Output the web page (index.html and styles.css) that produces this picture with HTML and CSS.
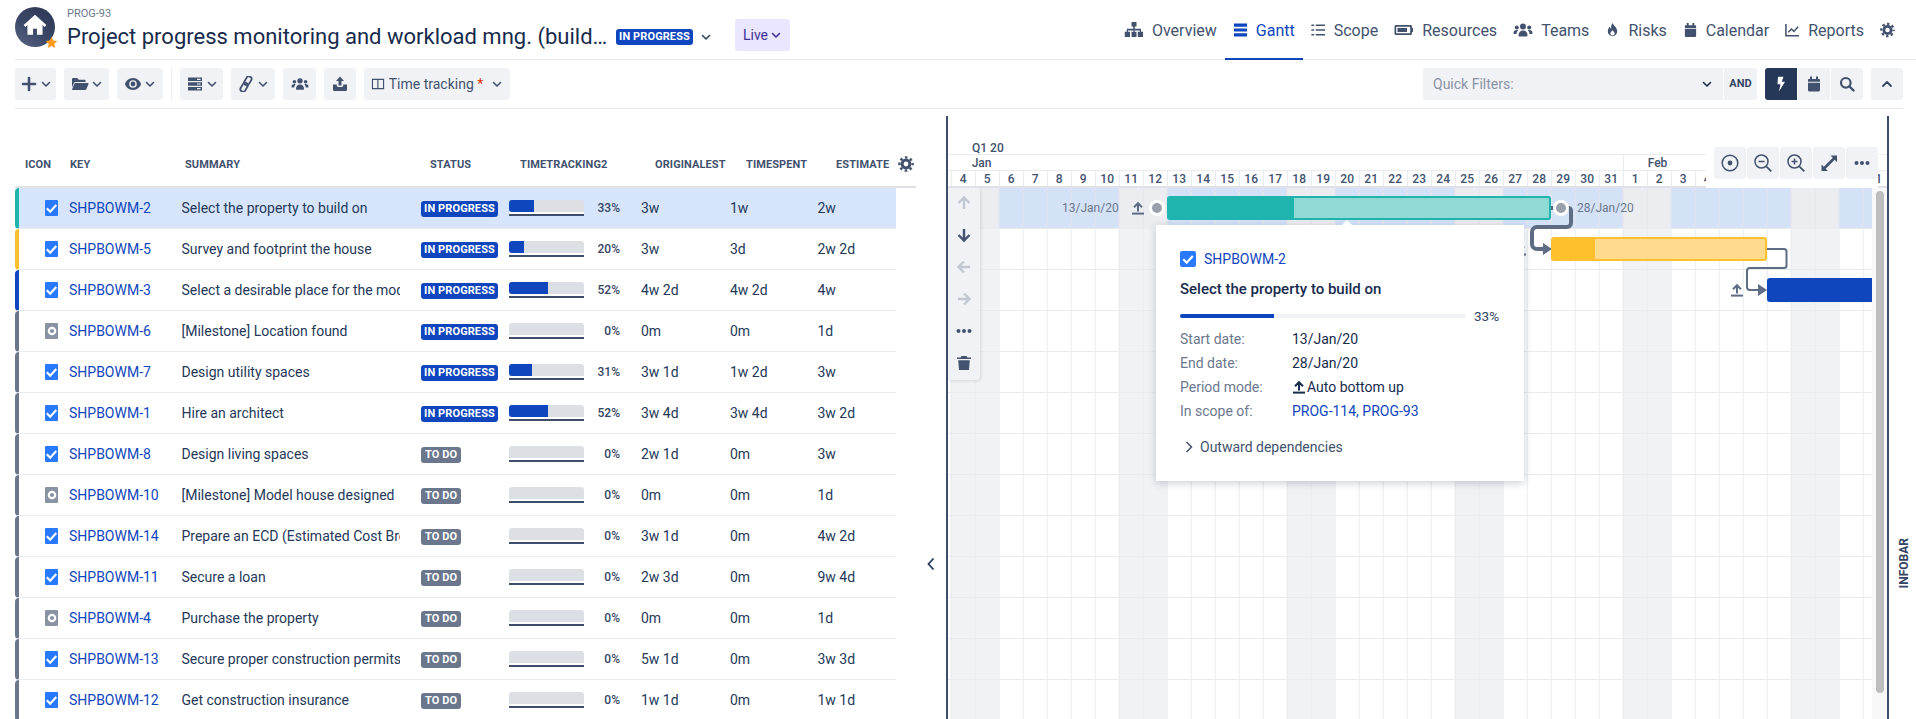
FILE: index.html
```html
<!DOCTYPE html>
<html lang="en">
<head>
<meta charset="utf-8">
<title>Project progress monitoring</title>
<link rel="stylesheet" href="styles.css">
</head>
<body>
<svg class="defs" width="0" height="0" aria-hidden="true">
  <symbol id="i-chev" viewBox="0 0 12 12"><path d="M2.5 4.5 6 8l3.500-3.500" fill="none" stroke="currentColor" stroke-width="1.600" stroke-linecap="round" stroke-linejoin="round"/></symbol>
  <symbol id="i-up" viewBox="0 0 12 12"><path d="M2 8l4-4 4 4" fill="none" stroke="currentColor" stroke-width="1.800" stroke-linecap="round" stroke-linejoin="round"/></symbol>
  <symbol id="i-plus" viewBox="0 0 16 16"><path d="M8 2v12M2 8h12" stroke="currentColor" stroke-width="2.600" stroke-linecap="round"/></symbol>
  <symbol id="i-folder" viewBox="0 0 18 16"><path d="M1 3.200C1 2.500 1.500 2 2.200 2h4l1.600 1.700h5.600c.7 0 1.200.5 1.200 1.200V6H4.600c-.8 0-1.400.4-1.700 1.100L1 11.500z" fill="currentColor"/><path d="M4.400 7h12.400c.5 0 .9.5.7 1l-2.200 5.300c-.2.4-.5.7-1 .7H1.800c-.5 0-.8-.5-.6-1L3.400 7.700c.2-.4.6-.7 1-.7z" fill="currentColor"/></symbol>
  <symbol id="i-eye" viewBox="0 0 18 16"><path fill-rule="evenodd" d="M9 2c4.300 0 7.500 3.500 8 6-.5 2.500-3.700 6-8 6s-7.500-3.500-8-6c.5-2.500 3.700-6 8-6zm0 2.200A3.800 3.800 0 1 0 9 11.800 3.800 3.800 0 0 0 9 4.200z" fill="currentColor"/><circle cx="9" cy="8" r="2.400" fill="currentColor"/></symbol>
  <symbol id="i-server" viewBox="0 0 16 16"><path fill-rule="evenodd" d="M1 1.500h14v3.600H1zM1 6.200h14v3.600H1zM1 10.900h14v3.600H1zM10 2.700v1.200h3.500V2.700zM10 7.400v1.200h3.500V7.400zM10 12.100v1.200h3.500v-1.200z" fill="currentColor"/></symbol>
  <symbol id="i-link" viewBox="0 0 16 16"><g fill="none" stroke="currentColor" stroke-width="1.800" transform="rotate(30 8 8)"><rect x="5.400" y="-.5" width="5.200" height="9.500" rx="2.600"/><rect x="5.400" y="7" width="5.200" height="9.500" rx="2.600"/></g></symbol>
  <symbol id="i-users" viewBox="0 0 20 16"><circle cx="10" cy="4.500" r="3" fill="currentColor"/><circle cx="3.800" cy="5.500" r="2" fill="currentColor"/><circle cx="16.200" cy="5.500" r="2" fill="currentColor"/><path d="M5.500 13.500c0-3 1.800-5 4.500-5s4.500 2 4.500 5c0 .5-.4 1-1 1h-7c-.6 0-1-.5-1-1zM.5 11c0-1.800 1.200-3 3.300-3 .5 0 1 .1 1.400.3-1 .9-1.500 2.100-1.700 3.700H1.500c-.6 0-1-.4-1-1zM19.500 11c0-1.800-1.200-3-3.300-3-.5 0-1 .1-1.400.3 1 .9 1.500 2.100 1.700 3.700h2c.6 0 1-.4 1-1z" fill="currentColor"/></symbol>
  <symbol id="i-export" viewBox="0 0 16 16"><path d="M8 .5 12 5H9.500v4.500h-3V5H4z" fill="currentColor"/><path d="M1 8.500h3.800v1c0 .8.600 1.400 1.400 1.400h3.600c.8 0 1.400-.6 1.400-1.400v-1H15v5.300c0 .7-.5 1.200-1.200 1.200H2.200c-.7 0-1.200-.5-1.200-1.200z" fill="currentColor"/></symbol>
  <symbol id="i-cols" viewBox="0 0 16 16"><path fill-rule="evenodd" d="M1 2h14v12H1zM2.300 3.300v9.400h4.900V3.300zm6.200 0v9.400h5.200V3.300z" fill="currentColor"/></symbol>
  <symbol id="i-tree" viewBox="0 0 20 16"><path d="M7.500 0h5v4.500h-1.700v2.300h6.200v3h2v5.200h-5.200V9.800h2V8.400h-5.200v1.400h1.900v5.200H7.500V9.800h1.900V8.400H4v1.400h2v5.200H.8V9.800h2v-3h6.400V4.500H7.500z" fill="currentColor"/></symbol>
  <symbol id="i-gantt" viewBox="0 0 16 16"><path d="M1 1h14v3.500H1zM1 6.300h14v3.400H1zM1 11.500h14V15H1z" fill="currentColor"/></symbol>
  <symbol id="i-list" viewBox="0 0 16 16"><path d="M5 3h10M5 8h10M5 13h10" stroke="currentColor" stroke-width="1.700"/><path d="M1 3h1.700M1 8h1.700M1 13h1.700" stroke="currentColor" stroke-width="1.700" stroke-linecap="round"/></symbol>
  <symbol id="i-battery" viewBox="0 0 20 16"><path fill-rule="evenodd" d="M2 3h14.500c.8 0 1.500.7 1.500 1.500V6h1v4h-1v1.500c0 .8-.7 1.500-1.500 1.500H2c-.8 0-1.500-.7-1.500-1.500v-7C.5 3.700 1.200 3 2 3zm.2 1.800v6.400h14V4.800z" fill="currentColor"/><path d="M3.500 6h9.500v4H3.500z" fill="currentColor"/></symbol>
  <symbol id="i-fire" viewBox="0 0 16 16"><path fill-rule="evenodd" d="M8.300.5c.4 2.700 4.700 4.400 4.700 9.100a5 5 0 0 1-10 0c0-2.300 1.100-3.900 2.300-5 .1 1.100.5 1.900 1.300 2.400C6.200 4.500 6.700 2.300 8.300.5zM8 8.200c-.8 1.200-2.300 1.900-2.300 3.500a2.300 2.300 0 0 0 4.600 0c0-1.500-1.500-2.300-2.300-3.500z" fill="currentColor"/></symbol>
  <symbol id="i-cal" viewBox="0 0 16 16"><path d="M4 .5h2V3h4V.5h2V3h1c.6 0 1 .5 1 1v1.800H2V4c0-.5.4-1 1-1h1zM2 6.700h12V14c0 .8-.6 1.500-1.400 1.500H3.400C2.600 15.500 2 14.800 2 14z" fill="currentColor"/></symbol>
  <symbol id="i-chart" viewBox="0 0 16 16"><path d="M1 1.500V14h14" fill="none" stroke="currentColor" stroke-width="1.600"/><path d="M3.500 10.500 7 7l2.500 2.500L14 4.500" fill="none" stroke="currentColor" stroke-width="1.600"/></symbol>
  <symbol id="i-gear" viewBox="0 0 16 16"><circle cx="8" cy="8" r="3.900" fill="none" stroke="currentColor" stroke-width="3"/><circle cx="8" cy="8" r="6.600" fill="none" stroke="currentColor" stroke-width="2.400" stroke-dasharray="2.590 2.590" stroke-dashoffset="1.295"/></symbol>
  <symbol id="i-bolt" viewBox="0 0 16 16"><path d="M5 .8h5.500L8.800 5.800H12L6 15.500l1.500-7.300H4.500z" fill="currentColor"/></symbol>
  <symbol id="i-search" viewBox="0 0 16 16"><circle cx="6.800" cy="6.800" r="4.800" fill="none" stroke="currentColor" stroke-width="2.200"/><path d="m10.500 10.500 4 4" stroke="currentColor" stroke-width="2.400" stroke-linecap="round"/></symbol>
  <symbol id="i-target" viewBox="0 0 20 20"><circle cx="10" cy="10" r="7.800" fill="none" stroke="currentColor" stroke-width="1.500"/><circle cx="10" cy="10" r="2.400" fill="currentColor"/></symbol>
  <symbol id="i-zoomout" viewBox="0 0 20 20"><circle cx="8.500" cy="8.500" r="6.500" fill="none" stroke="currentColor" stroke-width="1.500"/><path d="m13.300 13.300 5 5" stroke="currentColor" stroke-width="1.700"/><path d="M5.500 8.500h6" stroke="currentColor" stroke-width="1.500"/></symbol>
  <symbol id="i-zoomin" viewBox="0 0 20 20"><circle cx="8.500" cy="8.500" r="6.500" fill="none" stroke="currentColor" stroke-width="1.500"/><path d="m13.300 13.300 5 5" stroke="currentColor" stroke-width="1.700"/><path d="M5.500 8.500h6M8.500 5.500v6" stroke="currentColor" stroke-width="1.500"/></symbol>
  <symbol id="i-expand" viewBox="0 0 20 20"><path d="M11.500 2.500H18V9l-2.300-2.300L6.700 15.700 9 18H2.500v-6.500l2.300 2.300 9-9z" fill="currentColor"/></symbol>
  <symbol id="i-dots" viewBox="0 0 16 16"><circle cx="2.500" cy="8" r="2" fill="currentColor"/><circle cx="8" cy="8" r="2" fill="currentColor"/><circle cx="13.500" cy="8" r="2" fill="currentColor"/></symbol>
  <symbol id="i-trash" viewBox="0 0 16 16"><path d="M5.500 1h5l.8 1.500H15V4H1V2.500h3.700zM2.200 5.200h11.600l-.8 9.300c0 .3-.4.6-.8.6H3.800c-.4 0-.8-.3-.8-.6z" fill="currentColor"/></symbol>
  <symbol id="i-arrow-up" viewBox="0 0 16 16"><path d="M8 14V2.500M2.500 8 8 2.500 13.500 8" fill="none" stroke="currentColor" stroke-width="2.400"/></symbol>
  <symbol id="i-arrow-down" viewBox="0 0 16 16"><path d="M8 2v11.500M2.500 8 8 13.500 13.500 8" fill="none" stroke="currentColor" stroke-width="2.400"/></symbol>
  <symbol id="i-arrow-left" viewBox="0 0 16 16"><path d="M14 8H2.500M8 2.500 2.500 8 8 13.500" fill="none" stroke="currentColor" stroke-width="2.400"/></symbol>
  <symbol id="i-arrow-right" viewBox="0 0 16 16"><path d="M2 8h11.500M8 2.500 13.500 8 8 13.500" fill="none" stroke="currentColor" stroke-width="2.400"/></symbol>
  <symbol id="i-bottomup" viewBox="0 0 14 14"><path d="M7 10.500V2.500M3 6.200 7 2.200l4 4" fill="none" stroke="currentColor" stroke-width="2"/><path d="M1 12.600h12" stroke="currentColor" stroke-width="2"/></symbol>
  <symbol id="i-task" viewBox="0 0 13 16"><path d="M1.800 8.300 5.200 11.700 11.300 5" fill="none" stroke="#fff" stroke-width="2.200"/></symbol>
  <symbol id="i-ms" viewBox="0 0 13 16"><circle cx="7" cy="8" r="3.200" fill="none" stroke="#fff" stroke-width="2.200"/></symbol>
</svg>

<header class="top">
  <div class="avatar">
    <svg class="house" viewBox="0 0 24 24"><path d="M12 2.500 1.500 12l1.600 1.800L5 12.100V21h5.200v-5.500h3.600V21H19v-8.900l1.900 1.700 1.600-1.800z" fill="#fff"/></svg>
    <svg class="star" viewBox="0 0 14 14"><path d="m7 .8 1.900 4 4.400.6-3.200 3 .8 4.400L7 10.700l-3.900 2.100.8-4.400-3.200-3 4.400-.6z" fill="#ff991f"/></svg>
  </div>
  <div class="title-block">
    <div class="crumb">PROG-93</div>
    <div class="title-row">
      <h1 class="title">Project progress monitoring and workload mng. (build…</h1>
      <span class="badge badge-blue badge-title">IN PROGRESS</span>
      <svg class="chev chev-title"><use href="#i-chev"/></svg>
    </div>
  </div>
  <button class="live">Live<svg class="chev"><use href="#i-chev"/></svg></button>
  <nav class="nav">
    <a class="nav-item"><svg class="nav-icon wide"><use href="#i-tree"/></svg>Overview</a>
    <a class="nav-item active"><svg class="nav-icon"><use href="#i-gantt"/></svg>Gantt</a>
    <a class="nav-item"><svg class="nav-icon"><use href="#i-list"/></svg>Scope</a>
    <a class="nav-item"><svg class="nav-icon wide"><use href="#i-battery"/></svg>Resources</a>
    <a class="nav-item"><svg class="nav-icon wide"><use href="#i-users"/></svg>Teams</a>
    <a class="nav-item"><svg class="nav-icon"><use href="#i-fire"/></svg>Risks</a>
    <a class="nav-item"><svg class="nav-icon"><use href="#i-cal"/></svg>Calendar</a>
    <a class="nav-item"><svg class="nav-icon"><use href="#i-chart"/></svg>Reports</a>
    <a class="nav-item"><svg class="nav-icon"><use href="#i-gear"/></svg></a>
  </nav>
</header>

<div class="toolbar">
  <button class="btn w41"><svg class="tb-icon"><use href="#i-plus"/></svg><svg class="chev"><use href="#i-chev"/></svg></button>
  <button class="btn w45"><svg class="tb-icon"><use href="#i-folder"/></svg><svg class="chev"><use href="#i-chev"/></svg></button>
  <button class="btn w46"><svg class="tb-icon"><use href="#i-eye"/></svg><svg class="chev"><use href="#i-chev"/></svg></button>
  <span class="tb-sep"></span>
  <button class="btn w43"><svg class="tb-icon"><use href="#i-server"/></svg><svg class="chev"><use href="#i-chev"/></svg></button>
  <button class="btn w44"><svg class="tb-icon"><use href="#i-link"/></svg><svg class="chev"><use href="#i-chev"/></svg></button>
  <button class="btn w33"><svg class="tb-icon"><use href="#i-users"/></svg></button>
  <button class="btn w32"><svg class="tb-icon"><use href="#i-export"/></svg></button>
  <button class="btn w146"><svg class="tb-icon small"><use href="#i-cols"/></svg><span>Time tracking <em class="req">*</em></span><svg class="chev chev-tt"><use href="#i-chev"/></svg></button>
  <div class="tb-right">
    <div class="quick">Quick Filters:<svg class="chev"><use href="#i-chev"/></svg></div>
    <button class="btn and">AND</button>
    <div class="tb-group">
      <button class="btn w32 dark"><svg class="tb-icon"><use href="#i-bolt"/></svg></button>
      <button class="btn w32"><svg class="tb-icon"><use href="#i-cal"/></svg></button>
      <button class="btn w32"><svg class="tb-icon"><use href="#i-search"/></svg></button>
    </div>
    <button class="btn w32"><svg class="chev chev-up"><use href="#i-up"/></svg></button>
  </div>
</div>

<main class="main">
  <section class="table-pane">
    <div class="thead">
      <span>ICON</span><span>KEY</span><span>SUMMARY</span><span>STATUS</span><span>TIMETRACKING2</span><span>ORIGINALEST</span><span>TIMESPENT</span><span>ESTIMATE</span>
      <svg class="th-gear"><use href="#i-gear"/></svg>
    </div>
    <div class="tbody">
      <div class="row selected c-teal"><span class="ti task"><svg><use href="#i-task"/></svg></span><a class="key">SHPBOWM-2</a><span class="sum">Select the property to build on</span><span><span class="badge badge-blue">IN PROGRESS</span></span><span class="pg"><span class="pg-fill" style="width:33%"></span></span><span class="pct">33%</span><span>3w</span><span>1w</span><span>2w</span></div>
      <div class="row c-yellow"><span class="ti task"><svg><use href="#i-task"/></svg></span><a class="key">SHPBOWM-5</a><span class="sum">Survey and footprint the house</span><span><span class="badge badge-blue">IN PROGRESS</span></span><span class="pg"><span class="pg-fill" style="width:20%"></span></span><span class="pct">20%</span><span>3w</span><span>3d</span><span>2w 2d</span></div>
      <div class="row c-blue"><span class="ti task"><svg><use href="#i-task"/></svg></span><a class="key">SHPBOWM-3</a><span class="sum">Select a desirable place for the model house</span><span><span class="badge badge-blue">IN PROGRESS</span></span><span class="pg"><span class="pg-fill" style="width:52%"></span></span><span class="pct">52%</span><span>4w 2d</span><span>4w 2d</span><span>4w</span></div>
      <div class="row"><span class="ti ms"><svg><use href="#i-ms"/></svg></span><a class="key">SHPBOWM-6</a><span class="sum">[Milestone] Location found</span><span><span class="badge badge-blue">IN PROGRESS</span></span><span class="pg"></span><span class="pct">0%</span><span>0m</span><span>0m</span><span>1d</span></div>
      <div class="row"><span class="ti task"><svg><use href="#i-task"/></svg></span><a class="key">SHPBOWM-7</a><span class="sum">Design utility spaces</span><span><span class="badge badge-blue">IN PROGRESS</span></span><span class="pg"><span class="pg-fill" style="width:31%"></span></span><span class="pct">31%</span><span>3w 1d</span><span>1w 2d</span><span>3w</span></div>
      <div class="row"><span class="ti task"><svg><use href="#i-task"/></svg></span><a class="key">SHPBOWM-1</a><span class="sum">Hire an architect</span><span><span class="badge badge-blue">IN PROGRESS</span></span><span class="pg"><span class="pg-fill" style="width:52%"></span></span><span class="pct">52%</span><span>3w 4d</span><span>3w 4d</span><span>3w 2d</span></div>
      <div class="row"><span class="ti task"><svg><use href="#i-task"/></svg></span><a class="key">SHPBOWM-8</a><span class="sum">Design living spaces</span><span><span class="badge badge-gray">TO DO</span></span><span class="pg"></span><span class="pct">0%</span><span>2w 1d</span><span>0m</span><span>3w</span></div>
      <div class="row"><span class="ti ms"><svg><use href="#i-ms"/></svg></span><a class="key">SHPBOWM-10</a><span class="sum">[Milestone] Model house designed</span><span><span class="badge badge-gray">TO DO</span></span><span class="pg"></span><span class="pct">0%</span><span>0m</span><span>0m</span><span>1d</span></div>
      <div class="row"><span class="ti task"><svg><use href="#i-task"/></svg></span><a class="key">SHPBOWM-14</a><span class="sum">Prepare an ECD (Estimated Cost Breakdown)</span><span><span class="badge badge-gray">TO DO</span></span><span class="pg"></span><span class="pct">0%</span><span>3w 1d</span><span>0m</span><span>4w 2d</span></div>
      <div class="row"><span class="ti task"><svg><use href="#i-task"/></svg></span><a class="key">SHPBOWM-11</a><span class="sum">Secure a loan</span><span><span class="badge badge-gray">TO DO</span></span><span class="pg"></span><span class="pct">0%</span><span>2w 3d</span><span>0m</span><span>9w 4d</span></div>
      <div class="row"><span class="ti ms"><svg><use href="#i-ms"/></svg></span><a class="key">SHPBOWM-4</a><span class="sum">Purchase the property</span><span><span class="badge badge-gray">TO DO</span></span><span class="pg"></span><span class="pct">0%</span><span>0m</span><span>0m</span><span>1d</span></div>
      <div class="row"><span class="ti task"><svg><use href="#i-task"/></svg></span><a class="key">SHPBOWM-13</a><span class="sum">Secure proper construction permits</span><span><span class="badge badge-gray">TO DO</span></span><span class="pg"></span><span class="pct">0%</span><span>5w 1d</span><span>0m</span><span>3w 3d</span></div>
      <div class="row"><span class="ti task"><svg><use href="#i-task"/></svg></span><a class="key">SHPBOWM-12</a><span class="sum">Get construction insurance</span><span><span class="badge badge-gray">TO DO</span></span><span class="pg"></span><span class="pct">0%</span><span>1w 1d</span><span>0m</span><span>1w 1d</span></div>
    </div>
    <svg class="collapse" viewBox="0 0 12 16"><path d="M8.500 2.500 3.500 8l5 5.500" fill="none" stroke="currentColor" stroke-width="1.800"/></svg>
  </section>

  <section class="gantt">
    <div class="timeline">
      <div class="tl-quarter">Q1 20</div>
      <div class="tl-months"><span class="m-jan">Jan</span><span class="m-feb">Feb</span></div>
      <div class="tl-days"><span>4</span><span>5</span><span>6</span><span>7</span><span>8</span><span>9</span><span>10</span><span>11</span><span>12</span><span>13</span><span>14</span><span>15</span><span>16</span><span>17</span><span>18</span><span>19</span><span>20</span><span>21</span><span>22</span><span>23</span><span>24</span><span>25</span><span>26</span><span>27</span><span>28</span><span>29</span><span>30</span><span>31</span><span>1</span><span>2</span><span>3</span><span>4</span><span>5</span><span>6</span><span>7</span><span>8</span><span>9</span><span>10</span><span>11</span></div>
    </div>
    <div class="view-btns">
      <button class="vbtn"><svg><use href="#i-target"/></svg></button>
      <button class="vbtn"><svg><use href="#i-zoomout"/></svg></button>
      <button class="vbtn"><svg><use href="#i-zoomin"/></svg></button>
      <button class="vbtn"><svg><use href="#i-expand"/></svg></button>
      <button class="vbtn"><svg class="dots"><use href="#i-dots"/></svg></button>
    </div>
    <div class="gantt-body">
      <div class="canvas">
        <div class="hl-row"></div>
        <svg class="links" viewBox="0 0 924 531">
          <path d="M602 20h8" stroke="#5e6c84" stroke-width="4" fill="none"/>
          <path d="M619 20h1.500a2.500 2.500 0 0 1 2.500 2.500V35a4 4 0 0 1-4 4H589a5 5 0 0 0-5 5V56a5 5 0 0 0 5 5H597" stroke="#5e6c84" stroke-width="4" fill="none"/>
          <path d="M595 55l9 6-9 6z" fill="#5e6c84"/>
          <path d="M819 61h17a2.500 2.500 0 0 1 2.500 2.500V77.500a2.500 2.500 0 0 1-2.500 2.500H802a3 3 0 0 0-3 3v16a3 3 0 0 0 3 3h9" stroke="#5e6c84" stroke-width="2" fill="none"/>
          <path d="M810 96l9 6-9 6z" fill="#5e6c84"/>
        </svg>
        <span class="g-date g-date-start">13/Jan/20</span>
        <svg class="g-mode m1"><use href="#i-bottomup"/></svg>
        <span class="g-dot d1"></span>
        <div class="bar bar-teal"><span class="bar-done" style="width:33%"></span></div>
        <span class="g-dot d2"></span>
        <span class="g-date g-date-end">28/Jan/20</span>
        <svg class="g-mode m2"><use href="#i-bottomup"/></svg>
        <div class="bar bar-yellow"><span class="bar-done" style="width:20%"></span></div>
        <svg class="g-mode m3"><use href="#i-bottomup"/></svg>
        <div class="bar bar-blue"></div>

        <aside class="popup">
          <div class="pop-key"><span class="ti task ti-square"><svg><use href="#i-task"/></svg></span><a class="key">SHPBOWM-2</a></div>
          <div class="pop-title">Select the property to build on</div>
          <div class="pop-progress"><span class="pop-track"><span class="pop-fill" style="width:33%"></span></span><span class="pop-pct">33%</span></div>
          <dl class="pop-grid">
            <dt>Start date:</dt><dd>13/Jan/20</dd>
            <dt>End date:</dt><dd>28/Jan/20</dd>
            <dt>Period mode:</dt><dd class="pop-mode"><svg><use href="#i-bottomup"/></svg>Auto bottom up</dd>
            <dt>In scope of:</dt><dd><a class="key">PROG-114, PROG-93</a></dd>
          </dl>
          <div class="pop-deps"><svg viewBox="0 0 12 12"><path d="M3.500 1 8.500 6l-5 5" fill="none" stroke="currentColor" stroke-width="1.500"/></svg>Outward dependencies</div>
        </aside>

        <div class="actions">
          <svg class="off"><use href="#i-arrow-up"/></svg>
          <svg><use href="#i-arrow-down"/></svg>
          <svg class="off"><use href="#i-arrow-left"/></svg>
          <svg class="off"><use href="#i-arrow-right"/></svg>
          <svg><use href="#i-dots"/></svg>
          <svg><use href="#i-trash"/></svg>
        </div>
      </div>
      <div class="track"><span class="thumb"></span></div>
    </div>
  </section>
  <aside class="infobar"><span>INFOBAR</span></aside>
</main>
</body>
</html>
```

FILE: styles.css
```css
* { box-sizing: border-box; }
html, body { margin: 0; height: 100%; }
body {
  width: 1916px; height: 719px; overflow: hidden; background: #fff;
  font-family: Roboto, "Liberation Sans", sans-serif; font-size: 14px; color: #172b4d;
}
.defs { position: absolute; }
button { font: inherit; border: 0; cursor: pointer; }
svg { display: block; flex: none; }

/* Header */
.top {
  display: flex; align-items: flex-start; height: 60px; margin-left: 15px;
  border-bottom: 1.500px solid #e6e8ec;
}
.avatar {
  position: relative; width: 40px; height: 40px; margin-top: 7px; border-radius: 50%;
  background: linear-gradient(35deg, #5a6785 0%, #3b4766 45%, #2b3653 100%);
  display: flex; align-items: center; justify-content: center;
}
.house { width: 26px; height: 26px; margin-top: -5px; }
.star { position: absolute; right: -3px; bottom: -2px; width: 13px; height: 13px; }
.title-block { margin-left: 12px; width: 668px; }
.crumb { font-size: 11px; color: #6b778c; line-height: 13px; margin-top: 7px; }
.title-row { display: flex; align-items: center; height: 30px; margin-top: 2px; }
.title { margin: 0; font-size: 22px; font-weight: 400; line-height: 30px; white-space: nowrap; width: 549px; }
.badge {
  display: inline-flex; align-items: center; justify-content: center; height: 16px;
  border-radius: 3px; color: #fff; font-size: 11px; font-weight: 700; line-height: 16px; white-space: nowrap;
  letter-spacing: .1px;
}
.badge-blue { background: #0f46bd; width: 77px; }
.badge-gray { background: #6b778c; width: 40px; }
.chev { width: 12px; height: 12px; }
.chev-title { margin-left: 7px; color: #344563; }
.live {
  display: flex; align-items: center; justify-content: center; gap: 2px;
  width: 55px; height: 32px; margin-top: 19px; background: #eae6ff; color: #403294; border-radius: 3px; font-size: 14px;
}
.nav { display: flex; margin-left: auto; height: 60px; padding-right: 13px; }
.nav-item {
  display: flex; align-items: center; gap: 8px; padding: 2px 8px 0; height: 60px;
  color: #42526e; font-size: 16px; border-bottom: 2px solid transparent;
}
.nav-item.active { color: #0f46bd; border-bottom-color: #0f46bd; }
.nav-icon { width: 15px; height: 16px; }
.nav-icon.wide { width: 20px; }

/* Toolbar */
.toolbar {
  position: relative; display: flex; align-items: center; gap: 8px; height: 49px; margin: 0 13px 0 15px; padding-bottom: 1px;
  border-bottom: 1.500px solid #e6e8ec;
}
.btn {
  display: flex; align-items: center; justify-content: center; gap: 2px; height: 32px;
  background: #f1f2f6; color: #42526e; border-radius: 3px; font-size: 14px; padding: 0;
}
.tb-icon { width: 18px; height: 16px; }
.tb-icon.small { width: 14px; height: 14px; margin-right: 2px; }
.chev-tt { margin-left: 6px; }
.w41 { width: 41px; } .w45 { width: 45px; } .w46 { width: 46px; } .w43 { width: 43px; }
.w44 { width: 44px; } .w33 { width: 33px; } .w32 { width: 32px; } .w146 { width: 146px; }
.req { color: #de350b; font-style: normal; }
.tb-sep { width: 1px; height: 32px; background: #eceef1; }
.tb-right { display: flex; align-items: center; margin-left: auto; }
.quick {
  display: flex; align-items: center; justify-content: space-between; width: 300px; height: 32px;
  padding: 0 10px; background: #f1f2f6; color: #8993a4; border-radius: 3px 0 0 3px; margin-right: 1px;
}
.quick .chev { color: #172b4d; }
.and { width: 33px; font-size: 11px; font-weight: 700; border-radius: 0 3px 3px 0; color: #344563; }
.tb-group { display: flex; gap: 1px; margin: 0 8px; }
.tb-group .btn { border-radius: 0; }
.tb-group .btn:first-child { border-radius: 3px 0 0 3px; }
.tb-group .btn:last-child { border-radius: 0 3px 3px 0; }
.btn.dark { background: #253858; color: #fff; }
.chev-up { color: #344563; }

/* Main */
.main { display: flex; height: 610px; }
.table-pane { position: relative; width: 946px; flex: none; }
.thead {
  display: grid; grid-template-columns: 45px 115px 245px 90px 135px 91px 90px 62px 16px;
  align-items: center; align-content: end; margin-left: 15px; width: 901px; height: 79px; padding: 0 0 14px 10px;
  border-bottom: 2px solid #dfe1e6; color: #42526e; font-size: 11px; font-weight: 700; letter-spacing: .1px;
}
.th-gear { width: 16px; height: 16px; color: #42526e; }
.row {
  display: grid; grid-template-columns: 24px 112.500px 239.500px 88px 75px 36px 110px 87.500px 78.500px;
  align-items: center; height: 41px; margin-left: 15px; padding-left: 26px; width: 881px;
  border-left: 4px solid #6b778c; border-bottom: 1.500px solid #ebecf0; border-radius: 4px 0 0 4px;
  color: #253858;
}
.row > span:nth-child(7) { padding-left: 21px; }
.selected { background: #d7e5fc; }
.c-teal { border-left-color: #20b4ae; }
.c-yellow { border-left-color: #ffc02e; }
.c-blue { border-left-color: #0f46bd; }
.ti { display: block; width: 13px; height: 16px; border-radius: 1px; overflow: hidden; }
.ti svg { width: 13px; height: 16px; }
.task { background: #2979ff; }
.ms { background: #8993a4; }
.ti-square { width: 16px; height: 16px; border-radius: 2px; }
.ti-square svg { width: 16px; height: 16px; }
.key { color: #0f46bd; font-size: 14px; }
.sum { display: block; width: 218.500px; overflow: hidden; white-space: nowrap; }
.pg {
  position: relative; display: block; width: 75px; height: 16px;
  border-bottom: 2px solid #3f4c6b; background: linear-gradient(#dcdfe4 0 12px, #fff 12px);
  border-radius: 3px 3px 0 0;
}
.pg-fill { position: absolute; left: 0; top: 0; height: 12px; background: #0f46bd; border-radius: 3px 0 0 3px; }
.pct { text-align: right; font-size: 12px; font-weight: 500; color: #344563; }
.collapse { position: absolute; left: 925px; top: 447px; width: 12px; height: 16px; color: #253858; }

/* Gantt */
.gantt {
  position: relative; display: flex; flex-direction: column; width: 943px; flex: none;
  margin-top: 7px; border-left: 2px solid #3f4c6b; border-right: 2px solid #3f4c6b;
}
.timeline { flex: none; height: 72px; border-bottom: 2px solid #dfe1e6; overflow: hidden; font-size: 12px; font-weight: 500; color: #42526e; }
.tl-quarter { height: 39px; padding: 25px 0 0 24px; line-height: 14px; border-bottom: 1px solid #ebecf0; }
.tl-months { display: flex; height: 16px; line-height: 17px; border-bottom: 1px solid #ebecf0; padding-left: 2.700px; }
.m-jan { width: 672px; padding-left: 21px; flex: none; }
.m-feb { padding-left: 24px; border-left: 1px solid #ebecf0; flex: none; }
.tl-days { display: flex; height: 15px; line-height: 17px; padding-left: 2.700px; }
.tl-days span { flex: none; width: 24px; text-align: center; border-left: 1px solid #ebecf0; }
.view-btns { position: absolute; top: 31px; right: 9px; display: flex; gap: 1px; background: #fff; padding-left: 8px; height: 41px; }
.vbtn {
  display: flex; align-items: center; justify-content: center; width: 32px; height: 32px; padding: 0;
  background: #f1f2f6; border-radius: 3px; color: #42526e;
}
.vbtn svg { width: 20px; height: 20px; }
.vbtn svg.dots { width: 16px; height: 16px; }
.gantt-body { flex: 1; display: flex; min-height: 0; }
.canvas {
  position: relative; flex: none; width: 924px; overflow: hidden;
  background-color: #fff;
  background-image:
    linear-gradient(to bottom, transparent 40px, #e9ebef 40px),
    linear-gradient(90deg, #e9ebef 1px, transparent 1px),
    linear-gradient(90deg, #f1f2f6 48px, transparent 48px);
  background-size: 100% 41px, 24px 100%, 168px 100%;
  background-position: 0 0, 2.700px 0, 2.700px 0;
}
.hl-row {
  position: absolute; left: 0; right: 0; top: 0; height: 40px;
  background-image:
    linear-gradient(90deg, #e3e6ec 1px, transparent 1px),
    linear-gradient(90deg, #ecedf0 48px, #d4e2f8 48px);
  background-size: 24px 100%, 168px 100%;
  background-position: 2.700px 0, 2.700px 0;
}
.links { position: absolute; left: 0; top: 0; width: 924px; height: 531px; }
.g-date { position: absolute; top: 12px; line-height: 16px; font-size: 12px; color: #6b778c; }
.g-date-start { left: 114px; }
.g-date-end { left: 629px; }
.g-mode { position: absolute; width: 14px; height: 14px; color: #5e6c84; }
.m1 { left: 183px; top: 13px; }
.m2 { left: 565px; top: 54px; }
.m3 { left: 782px; top: 95px; }
.g-dot { position: absolute; top: 12px; width: 16px; height: 16px; border-radius: 50%; background: #9a9fad; border: 3px solid #fff; }
.d1 { left: 201px; }
.d2 { left: 605px; }
.bar { position: absolute; height: 24px; border-radius: 3px; overflow: hidden; border: 2px solid; }
.bar-done { display: block; height: 100%; margin: -2px 0 0 -2px; box-sizing: content-box; padding: 2px 0 2px 2px; }
.bar-teal { left: 218.700px; width: 384px; top: 8px; background: #90d9d4; border-color: #20b4ae; }
.bar-teal .bar-done { background: #20b4ae; }
.bar-yellow { left: 602.700px; width: 216px; top: 49px; background: #fed98e; border-color: #ffc02e; }
.bar-yellow .bar-done { background: #ffc02e; }
.bar-blue { left: 818.700px; width: 150px; top: 90px; background: #0f46bd; border-color: #0f46bd; }
.popup {
  position: absolute; left: 208px; top: 37px; width: 368px; height: 256px; padding: 26px 24px 0;
  background: #fff; box-shadow: 0 2px 8px rgba(9, 30, 66, .22);
}
.popup::before {
  content: ""; position: absolute; left: 186px; top: -5px; border: 5px solid transparent; border-top: 0;
  border-bottom-color: #fff;
}
.pop-key { display: flex; align-items: center; gap: 8px; height: 16px; }
.pop-title { margin-top: 12px; font-size: 15px; font-weight: 500; line-height: 20px; color: #172b4d; }
.pop-progress { display: flex; align-items: center; margin-top: 13px; height: 8px; }
.pop-track { display: block; width: 286px; height: 4px; background: #f1f2f6; border-radius: 2px; }
.pop-fill { display: block; height: 4px; background: #0f46bd; border-radius: 2px 0 0 2px; }
.pop-pct { margin-left: 8px; font-size: 13.500px; color: #344563; }
.pop-grid { display: grid; grid-template-columns: 112px 1fr; grid-auto-rows: 24px; align-items: center; margin: 7px 0 0; }
.pop-grid dt { color: #6b778c; }
.pop-grid dd { margin: 0; }
.pop-mode { display: flex; align-items: center; gap: 1px; }
.pop-mode svg { width: 14px; height: 14px; }
.pop-deps { display: flex; align-items: center; gap: 5px; margin-top: 16px; color: #42526e; padding-left: 3px; }
.pop-deps svg { width: 12px; height: 12px; }
.actions {
  position: absolute; left: 0; top: -1px; width: 32px; height: 193px; padding-top: 8px;
  display: flex; flex-direction: column; align-items: center; gap: 16px;
  background: #f1f2f6; border-radius: 0 4px 4px 0; box-shadow: 1px 1px 3px rgba(9, 30, 66, .12); color: #42526e;
}
.actions svg { width: 16px; height: 16px; }
.actions .off { color: #c1c7d0; }
.track { position: relative; flex: 1; background: #f8f8f8; }
.thumb { position: absolute; left: 4px; top: 3px; width: 8px; height: 502px; background: #bdbdbd; border-radius: 4px; }
.infobar { flex: 1; display: flex; align-items: center; justify-content: center; padding-left: 3px; }
.infobar span {
  writing-mode: vertical-rl; transform: rotate(180deg); font-size: 12px; font-weight: 700; color: #344563;
  margin-top: 299px;
}
```
